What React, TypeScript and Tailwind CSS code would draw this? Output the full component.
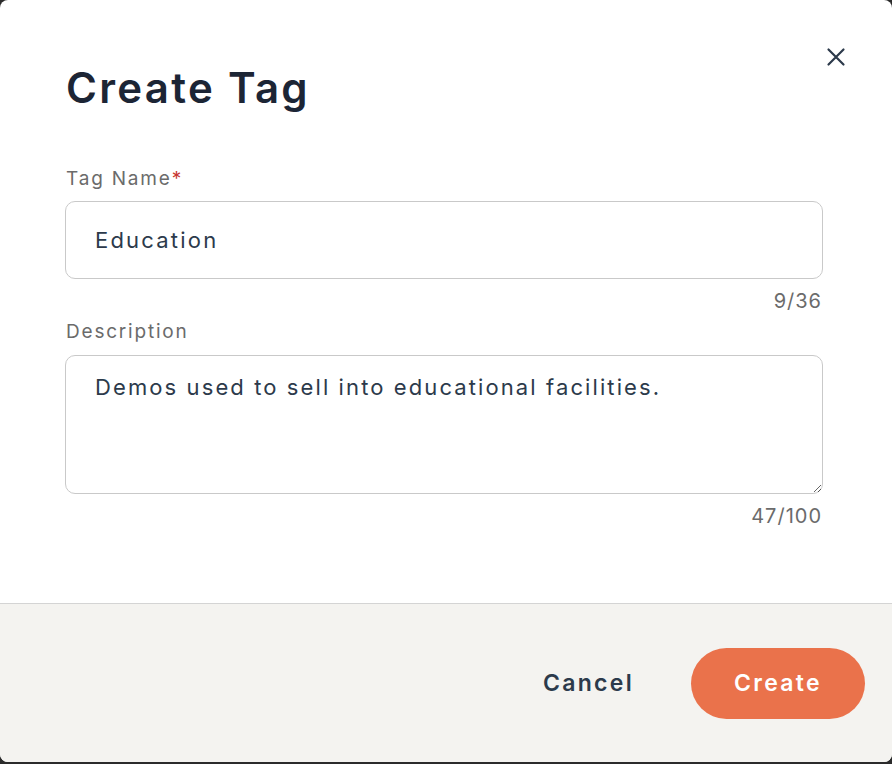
import { useState } from 'react';

const font = { fontFamily: 'Inter, "Noto Sans", sans-serif' };

export default function App() {
  const [name, setName] = useState('Education');
  const [desc, setDesc] = useState('Demos used to sell into educational facilities.');

  return (
    <div className="h-screen w-full bg-[#2b2b2b]" style={font}>
      <div className="flex h-[762px] w-full flex-col overflow-hidden rounded-lg bg-white">
        <div className="relative flex-1 px-[66px] pt-[61px]">
          <button
            type="button"
            className="absolute right-[44px] top-[45px] flex h-[24px] w-[24px] items-center justify-center text-[#2c3a4b]"
          >
            <svg width="20" height="20" viewBox="0 0 20 20" fill="none" stroke="currentColor" strokeWidth="2.2" strokeLinecap="round">
              <path d="M2.5 2.5 L17.5 17.5 M17.5 2.5 L2.5 17.5" />
            </svg>
          </button>

          <h2 className="text-[42px] font-semibold leading-[54px] tracking-[2.3px] text-[#1c2535]">Create Tag</h2>

          <div className="mt-[51px]">
            <label className="block text-[19px] leading-[26px] tracking-[1.8px] text-[#6b6b6b]">
              Tag Name<span className="text-[#c7372f]">*</span>
            </label>
            <input
              value={name}
              onChange={(e) => setName(e.target.value)}
              className="mt-[9px] block h-[78px] w-[758px] -ml-px rounded-[10px] border border-[#c9c9c9] px-[29px] text-[22px] tracking-[2.2px] text-[#2c3a4b] outline-none"
            />
            <p className="mt-[9px] w-[756px] text-right text-[20px] leading-[26px] tracking-[1px] text-[#6b6b6b]">{name.length}/36</p>
          </div>

          <div className="mt-[5px]">
            <label className="block text-[19px] leading-[26px] tracking-[1.8px] text-[#6b6b6b]">Description</label>
            <textarea
              value={desc}
              onChange={(e) => setDesc(e.target.value)}
              className="mt-[10px] block h-[139px] w-[758px] -ml-px rounded-[10px] border border-[#c9c9c9] px-[29px] py-[15px] text-[22px] leading-[32px] tracking-[2.1px] text-[#2c3a4b] outline-none"
            />
            <p className="mt-[9px] w-[756px] text-right text-[20px] leading-[26px] tracking-[1px] text-[#6b6b6b]">{desc.length}/100</p>
          </div>
        </div>

        <div className="flex h-[159px] items-center justify-end gap-[57px] border-t border-[#d4d4d4] bg-[#f4f3f0] pr-[27px]">
          <button type="button" className="text-[23px] font-semibold tracking-[2.3px] text-[#2c3a4b]">
            Cancel
          </button>
          <button
            type="button"
            className="h-[71px] w-[174px] rounded-full bg-[#ea724b] text-[23px] font-semibold tracking-[2.3px] text-white"
          >
            Create
          </button>
        </div>
      </div>
    </div>
  );
}
